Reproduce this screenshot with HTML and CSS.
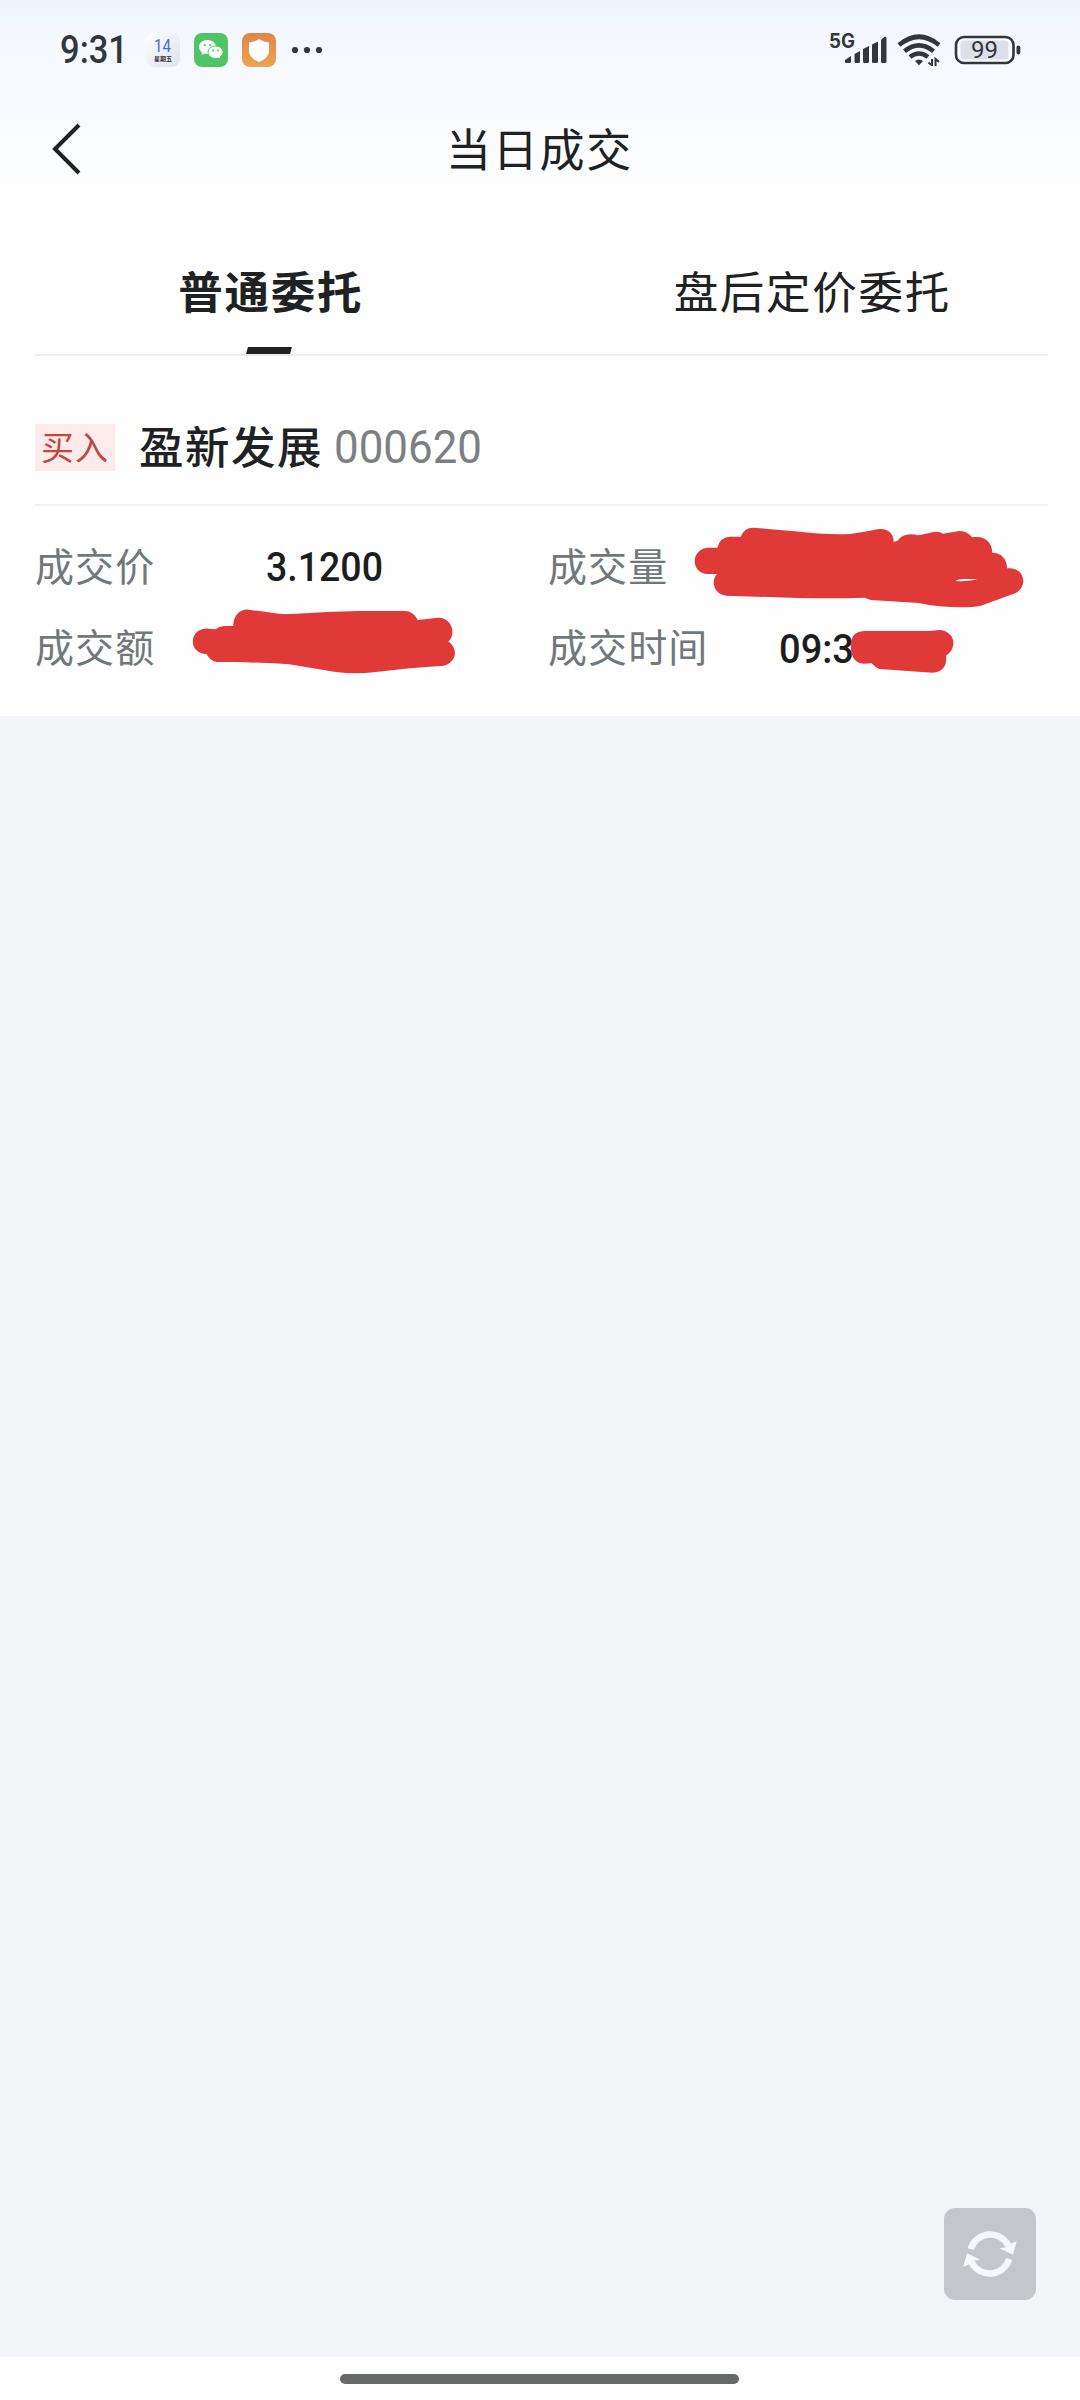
FILE: index.html
```html
<!DOCTYPE html>
<html lang="zh-CN">
<head>
<meta charset="utf-8">
<title>当日成交</title>
<link rel="stylesheet" href="styles.css">
</head>
<body>
<div class="screen">
  <header class="top">
    <div class="status">
      <div class="status-left">
        <svg class="clock" width="74" height="50" viewBox="0 0 74 50"><text x="1" y="38" textLength="68" lengthAdjust="spacingAndGlyphs">9:31</text></svg>
        <svg class="app-icon calendar" width="34" height="34" viewBox="0 0 34 34">
          <defs><linearGradient id="cal" x1="0" y1="0" x2="1" y2="1"><stop offset="0" stop-color="#fcfdff"/><stop offset="1" stop-color="#dfe3ec"/></linearGradient></defs>
          <rect width="34" height="34" rx="8" fill="url(#cal)"/>
          <text class="cal-day" x="8" y="19" textLength="17" lengthAdjust="spacingAndGlyphs">14</text>
          <text class="cal-week" x="8" y="28" textLength="18">星期五</text>
        </svg>
        <svg class="app-icon" width="34" height="34" viewBox="0 0 34 34">
          <rect width="34" height="34" rx="8" fill="#51c566"/>
          <path d="M13.500 7C8.700 7 5 10.100 5 14c0 2.200 1.200 4.200 3 5.400L7.500 22l3-1.500c1 .3 2 .5 3 .5C18 21 22 18 22 14S18 7 13.500 7z" fill="#fff"/>
          <path d="M21.500 13c-4.200 0-7.500 2.700-7.500 6.200s3.300 6.200 7.500 6.200c.9 0 1.700-.1 2.500-.4l2.600 1.300-.6-2.300c1.800-1.200 3-2.900 3-4.800 0-3.500-3.300-6.200-7.500-6.200z" fill="#fff" stroke="#51c566"/>
          <g fill="#51c566"><circle cx="10.700" cy="12" r="1.100"/><circle cx="16.300" cy="12" r="1.100"/><circle cx="19" cy="17.600" r="1"/><circle cx="24" cy="17.600" r="1"/></g>
        </svg>
        <svg class="app-icon" width="34" height="34" viewBox="0 0 34 34">
          <defs><linearGradient id="guard" x1="0" y1="0" x2="0" y2="1"><stop offset="0" stop-color="#df8549"/><stop offset="1" stop-color="#eba650"/></linearGradient></defs>
          <rect width="34" height="34" rx="8" fill="url(#guard)"/>
          <path d="M17 6c3 2 6 3 10 3.400V18c0 5-5 9-10 11C12 27 7 23 7 18V9.400C11 9 14 8 17 6z" fill="#fff"/>
        </svg>
        <svg class="more" width="32" height="8" viewBox="0 0 32 8" fill="#33363b"><circle cx="4" cy="4" r="3.100"/><circle cx="16" cy="4" r="3.100"/><circle cx="28" cy="4" r="3.100"/></svg>
      </div>
      <div class="status-right">
        <svg width="62" height="44" viewBox="-3 -5 62 44" fill="#33363b">
          <text class="net" x="-1" y="15" textLength="26" lengthAdjust="spacingAndGlyphs">5G</text>
          <path d="M15 27l6-4v5.500q0 1.500-1.500 1.500h-3q-1.500 0-1.500-1.500zM24.500 21l5.500-3v10.500q0 1.500-1.500 1.500H26q-1.500 0-1.500-1.500zM33 16l6-3v15.500q0 1.500-1.500 1.500h-3q-1.500 0-1.500-1.500zM42 11.500l6-3v20q0 1.500-1.500 1.500h-3q-1.500 0-1.500-1.500zM51 7l3.500-3.200q2-.5 2 1.200v23.500q0 1.500-1.500 1.500h-2.500q-1.500 0-1.500-1.500z"/>
        </svg>
        <svg class="wifi" width="44" height="34" viewBox="0 0 44 34" fill="none" stroke="#33363b" stroke-width="4.600">
          <path d="M2 12Q22-4.500 42 12M7.500 18.300Q22 6.500 36.500 18.300M13 24q9-7 18 0"/>
          <path d="M18 28q4-3 8 0l-4 4.200z" fill="#33363b" stroke="none"/>
          <path d="M35 26v7M31.500 29.500l3.500 3M38.500 33v-7l3.500 3" stroke-width="2"/>
        </svg>
        <svg class="battery" width="68" height="40" viewBox="0 -5 68 40">
          <rect x="2" y="2" width="57.500" height="26" rx="8" fill="#fafbfe" stroke="#33363b" stroke-width="2.600"/>
          <rect x="6.500" y="5.500" width="48" height="19" rx="4" fill="#dde0e8"/>
          <rect x="62.500" y="10.500" width="3.800" height="9" rx="1.900" fill="#33363b"/>
          <text class="level" x="17" y="23" textLength="27" lengthAdjust="spacingAndGlyphs">99</text>
        </svg>
      </div>
    </div>
    <div class="titlebar">
      <svg class="back" width="30" height="52" viewBox="0 0 30 52"><path d="M27 2L3 26l24 24" fill="none" stroke="#202124" stroke-width="4"/></svg>
      <h1>当日成交</h1>
    </div>
  </header>
  <nav class="tabs">
    <div class="tab active"><span>普通委托</span></div>
    <div class="tab"><span>盘后定价委托</span></div>
  </nav>
  <section class="card">
    <div class="stock">
      <span class="side">买入</span>
      <span class="name">盈新发展</span>
      <svg class="code" width="156" height="64" viewBox="-4 -8 156 64"><text x="0" y="40" textLength="148" lengthAdjust="spacingAndGlyphs">000620</text></svg>
    </div>
    <div class="details">
      <div class="half">
        <dl><dt>成交价</dt><dd><svg class="num" width="126" height="56" viewBox="-4 -8 126 56"><text x="0" y="34.500" textLength="117" lengthAdjust="spacingAndGlyphs">3.1200</text></svg></dd>
        <dt>成交额</dt><dd></dd></dl>
        <svg class="scribble" viewBox="0 18 1568 630" preserveAspectRatio="none" fill="#e03a38">
          <path d="M600 463C575 460 560 445 560 425C560 400 580 384 605 386L625 388Q640 377 655 378H677C678 345 698 326 722 329L810 341Q830 343 860 341Q950 335 1040 333H1175Q1200 333 1213 360L1272 353C1310 351 1327 400 1302 425C1333 445 1324 490 1288 497L1190 505L1085 517Q1030 523 970 515L840 493L795 490L690 486H630Q612 485 600 463Z"/>
        </svg>
      </div>
      <div class="half">
        <dl class="right"><dt>成交量</dt><dd></dd>
        <dt>成交时间</dt><dd><svg class="num" width="86" height="56" viewBox="-4 -8 86 56"><text x="0" y="35.500" textLength="75" lengthAdjust="spacingAndGlyphs">09:3</text></svg></dd></dl>
        <svg class="scribble" viewBox="0 18 1568 630" preserveAspectRatio="none" fill="#e03a38">
          <path fill-rule="evenodd" d="M514 222H487C436 219 437 148 487 143H515Q522 112 550 110H583Q593 82 620 83L740 94Q830 105 900 102Q940 97 980 88C1008 82 1028 101 1027 126L1038 122Q1058 95 1098 106Q1130 98 1150 95Q1163 95 1170 101L1218 93Q1238 92 1255 112C1290 105 1314 126 1313 158C1342 158 1357 180 1356 205C1392 200 1410 230 1401 256Q1395 272 1380 280L1280 317Q1240 326 1160 319Q1130 316 1100 309L960 300L943 293Q860 296 750 294L540 287C508 283 493 248 514 222ZM1205 243Q1215 236 1235 237H1270Q1245 245 1205 243Z"/>
          <path d="M940 393H1130L1160 390C1203 392 1216 443 1179 467C1183 496 1169 517 1140 518L985 507Q972 501 963 490L940 491C912 490 900 465 903 425Q907 395 940 393Z"/>
        </svg>
      </div>
    </div>
  </section>
  <main class="empty">
    <div class="refresh">
      <svg width="54" height="50" viewBox="0 0 54 50">
        <g id="arc"><path d="M7.800 20A20.300 20.300 0 0 1 45.300 16.500" fill="none" stroke="#f6f7fb" stroke-width="6.500"/><path d="M53.700 12.300L50 25.700L36.500 19.300L42 18.500L48 14.500z" fill="#f6f7fb"/></g>
        <use href="#arc" transform="rotate(180 27 25)"/>
      </svg>
    </div>
  </main>
  <footer class="navbar"><div class="pill"></div></footer>
</div>
</body>
</html>
```
FILE: styles.css
```css
* { box-sizing: border-box; }
body { margin: 0; background: #fefefe; color: #202122; font-family: "Noto Sans CJK SC", sans-serif; }
svg { display: block; flex: none; }
.screen { width: 1080px; height: 2400px; display: flex; flex-direction: column; }
.top { height: 220px; background: linear-gradient(#ecf4fe 0, #f4f8fe 30px, #f9faff 110px, #fcfdff 165px, #fefefe 200px); }
.status { height: 100px; padding: 0 58px 0 59px; display: flex; justify-content: space-between; align-items: center; }
.status-left, .status-right { display: flex; align-items: center; }
.clock text { font: 500 38px Roboto, sans-serif; fill: #33363b; }
.calendar { margin-left: 13px; }
.app-icon + .app-icon { margin-left: 14px; }
.more { margin-left: 15px; }
.cal-day { font: 400 18px Roboto, sans-serif; fill: #4470c8; }
.cal-week { font: 700 6px "Noto Sans CJK SC", sans-serif; fill: #33363b; }
.net { font: 700 19.500px Inter, sans-serif; }
.wifi { margin-left: 8px; }
.battery { margin-left: 13px; }
.level { font: 400 23.500px Roboto, sans-serif; fill: #33363b; }
.titlebar { height: 98px; padding: 0 53px 0 52px; display: grid; grid-template-columns: 30px 1fr 30px; align-items: center; }
h1 { margin: -3px 0 0; font-size: 45px; line-height: 60px; letter-spacing: 1.800px; font-weight: 400; text-align: center; }
.tabs { height: 136px; margin: 0 32px 0 35px; border-bottom: 2px solid #eeeeef; display: grid; grid-template-columns: 1fr 1fr; }
.tab { display: flex; flex-direction: column; align-items: center; justify-content: space-between; padding-top: 40px; font-size: 44.500px; line-height: 60px; letter-spacing: 1.700px; }
.tab:first-child { padding-right: 35px; }
.tab:last-child { padding-left: 35px; }
.active { font-weight: 600; }
.active::after { content: ""; width: 44px; height: 7px; margin-left: -4px; background: #202122; transform: skewX(-15deg); }
.card { height: 360px; }
.stock { height: 150px; margin: 0 32px 0 35px; border-bottom: 2px solid #f0f0f1; padding: 68px 0 34px; display: flex; align-items: center; }
.side { width: 80px; height: 47px; background: #fbeceb; color: #c24642; font-size: 33px; line-height: 44px; letter-spacing: 1px; text-align: center; }
.name { margin: -5px 0 0 24px; font-size: 44.500px; line-height: 60px; letter-spacing: 1.500px; font-weight: 500; }
.code { margin-left: 7px; }
.code text { font: 400 47px Roboto, sans-serif; fill: #7b8082; }
.details { height: 210px; display: grid; grid-template-columns: 540px 540px; }
.half { position: relative; padding: 19px 0 0 35px; }
dl { margin: 0; display: grid; grid-template-columns: 227px 1fr; grid-auto-rows: 81px; align-items: center; }
dl.right { grid-template-columns: 227px 1fr; margin-left: -27px; }
dt { margin-top: -4px; font-size: 39px; line-height: 60px; letter-spacing: 1.100px; color: #72787a; }
dd { margin: 0; }
.num text { font: 500 41px Roboto, sans-serif; fill: #1c1d1e; }
.scribble { position: absolute; inset: 0; width: 540px; height: 210px; }
.empty { flex: 1; background: #f4f5f9; display: flex; justify-content: flex-end; align-items: flex-end; padding: 0 44px 57px 0; }
.refresh { width: 92px; height: 92px; border-radius: 11px; background: #c5c6cb; display: flex; align-items: center; justify-content: center; }
.navbar { height: 43px; background: #fefefe; display: flex; justify-content: center; padding-top: 17px; }
.pill { width: 399px; height: 10px; margin-right: 1px; border-radius: 5px; background: #686a69; }
```
